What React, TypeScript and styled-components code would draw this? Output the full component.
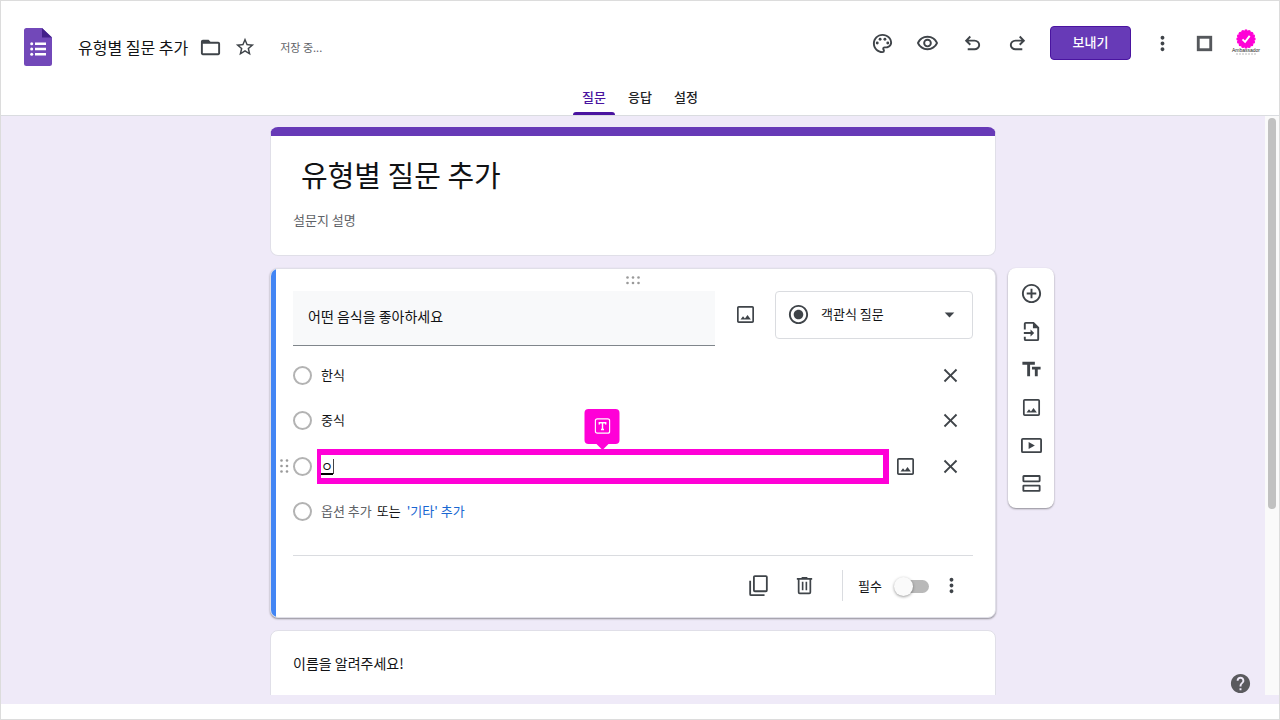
import React from "react";
import styled, { createGlobalStyle, css } from "styled-components";
import {
  MdAddCircleOutline,
  MdArrowDropDown,
  MdClose,
  MdFolderOpen,
  MdHelp,
  MdMoreVert,
  MdOutlinePalette,
  MdOutlineVisibility,
  MdRadioButtonChecked,
  MdStarBorder,
  MdTextFields,
} from "react-icons/md";

const color = {
  ink: "#111214",
  icon: "#3f4449",
  muted: "#5f6368",
  line: "#dadce0",
  purple: "#673ab7",
  purpleDark: "#4a14a0",
  canvas: "#efeaf8",
  blue: "#4285f4",
  link: "#1967d2",
  pink: "#ff00d7",
};

const GlobalStyle = createGlobalStyle`
  * { box-sizing: border-box; }
  body { margin: 0; background: #fff; }
  body, button, input, select {
    font-family: "Noto Sans CJK KR", "Noto Sans", sans-serif;
    font-size: 13px;
    line-height: 20px;
    color: ${color.ink};
  }
  button, input, select { margin: 0; padding: 0; border: 0; background: none; outline: none; }
  button { cursor: pointer; }
  h1, p { margin: 0; font-weight: 400; }
`;

const Page = styled.div`
  display: flex;
  flex-direction: column;
  height: 100vh;
  border: 1px solid #dcdcdc;
  background: #fff;
`;

const Header = styled.header`
  flex: none;
  border-bottom: 1px solid ${color.line};
`;

const TopBar = styled.div`
  display: flex;
  align-items: flex-start;
  justify-content: space-between;
  height: 82px;
  padding: 25px 12px 0 23px;
`;

const TitleGroup = styled.div`
  display: flex;
  align-items: center;
  height: 42px;
`;

const Logo = styled.svg`
  width: 28px;
  height: 38px;
  margin-right: 26px;
`;

const DocName = styled.h1`
  margin-right: 11px;
  font-size: 16px;
  line-height: 24px;
`;

const SaveStatus = styled.span`
  margin-left: 13px;
  font-size: 11px;
  color: ${color.muted};
`;

const Actions = styled.div`
  display: flex;
  align-items: center;
  height: 34px;
`;

const IconButton = styled.button<{ $width?: number; $size?: number }>`
  display: flex;
  flex: none;
  align-items: center;
  justify-content: center;
  width: ${(p) => p.$width ?? 45}px;
  height: 34px;
  color: ${color.icon};

  svg {
    width: ${(p) => p.$size ?? 23}px;
    height: ${(p) => p.$size ?? 23}px;
  }
`;

const SendButton = styled.button`
  width: 81px;
  height: 34px;
  margin: 0 10px;
  padding-bottom: 2px;
  border: 1px solid ${color.purpleDark};
  border-radius: 4px;
  background: ${color.purple};
  color: #fff;
  font-weight: 500;
`;

const Tabs = styled.nav`
  display: flex;
  justify-content: center;
  height: 32px;
`;

const Tab = styled.button<{ $active?: boolean }>`
  display: flex;
  flex-direction: column;
  align-items: center;
  justify-content: space-between;
  width: 46px;
  padding-top: 4px;
  font-weight: 500;
  color: ${(p) => (p.$active ? color.purpleDark : "#202124")};

  &::after {
    content: "";
    width: 42px;
    height: 3px;
    border-radius: 3px 3px 0 0;
    background: ${(p) => (p.$active ? color.purpleDark : "transparent")};
  }
`;

const Workspace = styled.div`
  position: relative;
  display: flex;
  flex: 1;
  min-height: 0;
  padding-bottom: 9px;
  background: ${color.canvas};
`;

const FormArea = styled.main`
  display: grid;
  flex: 1;
  grid-template-columns: 1fr minmax(0, 726px) 1fr;
  grid-auto-rows: max-content;
  gap: 12px 0;
  padding-top: 11px;
  overflow: hidden;
`;

const ScrollTrack = styled.div`
  width: 14px;
  padding: 2px 3px;
  background: #fafafa;
`;

const ScrollThumb = styled.div`
  height: 68%;
  border-radius: 4px;
  background: #c1c1c1;
`;

const BottomStrip = styled.div`
  flex: none;
  height: 15px;
`;

const Card = styled.section`
  grid-column: 2;
  border: 1px solid #e0dfe8;
  border-radius: 8px;
  background: #fff;
`;

const TitleCard = styled(Card)`
  display: flex;
  flex-direction: column;
  gap: 16px;
  padding: 18px 22px 25px;
  border-top: 9px solid ${color.purple};
`;

const FormTitle = styled.input`
  width: 100%;
  height: 40px;
  padding-left: 8px;
  font-size: 29px;
  line-height: 40px;
`;

const FormDescription = styled.input`
  width: 100%;
  height: 20px;

  &::placeholder {
    color: ${color.muted};
    opacity: 1;
  }
`;

const QuestionCard = styled(Card)`
  position: relative;
  padding: 0 22px 3px;
  overflow: hidden;
  box-shadow: 0 1px 2px rgba(0, 0, 0, 0.4);

  &::before {
    content: "";
    position: absolute;
    inset: -1px auto -1px -1px;
    width: 6px;
    background: ${color.blue};
  }
`;

const CardGrip = styled.div`
  display: flex;
  align-items: center;
  justify-content: center;
  height: 22px;
`;

const PromptRow = styled.div`
  display: flex;
  align-items: flex-start;
  margin-bottom: 7px;
`;

const PromptInput = styled.input`
  flex: 1;
  min-width: 0;
  height: 55px;
  padding: 0 15px 5px;
  border-bottom: 1px solid #80868b;
  background: #f8f9fa;
  font-size: 14px;
`;

const PromptImage = styled(IconButton)`
  height: 46px;
`;

const TypePicker = styled.label`
  display: flex;
  align-items: center;
  width: 198px;
  height: 48px;
  padding: 0 11px 2px;
  border: 1px solid ${color.line};
  border-radius: 4px;
  color: ${color.icon};

  svg {
    flex: none;
    width: 23px;
    height: 23px;
  }
`;

const TypeSelect = styled.select`
  flex: 1;
  min-width: 0;
  margin-left: 11px;
  appearance: none;
`;

const OptionRow = styled.div<{ $active?: boolean }>`
  position: relative;
  display: flex;
  align-items: center;
  height: ${(p) => (p.$active ? 46 : 45)}px;
`;

const OptionGrip = styled.svg`
  position: absolute;
  left: -13px;
  width: 9px;
  height: 15px;
`;

const Radio = styled.input`
  flex: none;
  width: 19px;
  height: 19px;
  margin-right: 5px;
  border: 2px solid #b3b3b3;
  border-radius: 50%;
  appearance: none;
`;

const field = css`
  flex: 1;
  min-width: 0;
  height: 35px;
  border: 6px solid transparent;
  border-left-width: 4px;
`;

const OptionInput = styled.input`
  ${field}
  padding-bottom: 2px;
`;

const ActiveField = styled.label`
  ${field}
  position: relative;
  display: flex;
  align-items: center;
  border-color: ${color.pink};
  cursor: text;
`;

const ComposingInput = styled.input`
  width: 12px;
  height: 18px;
  border-bottom: 2px solid #000;
  line-height: 16px;
`;

const Caret = styled.span`
  width: 1px;
  height: 15px;
  background: #444;
`;

const TypeBadge = styled.span`
  position: absolute;
  bottom: 100%;
  left: 50%;
  display: flex;
  align-items: center;
  justify-content: center;
  width: 35px;
  height: 35px;
  margin-bottom: 11px;
  border-radius: 4px;
  background: ${color.pink};
  transform: translateX(-50%);

  svg {
    width: 16px;
    height: 16px;
  }

  &::after {
    content: "";
    position: absolute;
    top: 100%;
    border: 6px solid transparent;
    border-top-color: ${color.pink};
    border-bottom: 0;
  }
`;

const OptionImage = styled(IconButton)`
  margin: 0 11px 0 5px;
`;

const AddOption = styled.button`
  margin-left: 4px;
  padding-bottom: 2px;
  color: ${color.muted};
`;

const OrText = styled.span`
  margin: 0 6px 0 5px;
  padding-bottom: 2px;
`;

const AddOther = styled.button`
  padding-bottom: 2px;
  color: ${color.link};
`;

const CardFooter = styled.footer`
  display: flex;
  align-items: center;
  justify-content: flex-end;
  height: 59px;
  margin-top: 21px;
  border-top: 1px solid ${color.line};
`;

const FooterDivider = styled.span`
  width: 1px;
  height: 31px;
  margin: 0 15px;
  background: ${color.line};
`;

const RequiredLabel = styled.label`
  display: flex;
  align-items: center;
  gap: 15px;
  padding-top: 2px;
`;

const Toggle = styled.input`
  position: relative;
  width: 32px;
  height: 13px;
  border-radius: 7px;
  background: #b9b9b9;
  appearance: none;

  &::before {
    content: "";
    position: absolute;
    top: -3px;
    left: -3px;
    width: 19px;
    height: 19px;
    border-radius: 50%;
    background: #fafafa;
    box-shadow: 0 1px 3px rgba(0, 0, 0, 0.4);
  }
`;

const SideTools = styled.aside`
  grid-column: 3;
  align-self: start;
  justify-self: start;
  display: flex;
  flex-direction: column;
  width: 46px;
  margin-left: 12px;
  padding: 6px 0;
  border-radius: 8px;
  background: #fff;
  box-shadow: 0 1px 2px rgba(0, 0, 0, 0.4);
`;

const ToolButton = styled(IconButton)`
  height: 38px;
`;

const NextCard = styled(Card)`
  min-height: 120px;
  padding: 22px;
  font-size: 14px;
`;

const HelpButton = styled(IconButton)`
  position: absolute;
  right: 27px;
  bottom: 4px;
  color: #5a5a5e;
`;

const FormsLogo = () => (
  <Logo viewBox="0 0 28 38" aria-hidden="true">
    <path d="M2.5 0H18l10 9.5v26a2.5 2.5 0 0 1-2.5 2.5h-23A2.5 2.5 0 0 1 0 35.5v-33A2.5 2.5 0 0 1 2.5 0z" fill="#7248b9" />
    <path d="M18 0l10 9.5H18z" fill="#43208a" />
    <g fill="#fff">
      <path d="M11 14.500h11v2.500H11zM11 19.800h11v2.500H11zM11 25h11v2.500H11z" />
      <circle cx="7.700" cy="15.700" r="1.500" />
      <circle cx="7.700" cy="21" r="1.500" />
      <circle cx="7.700" cy="26.300" r="1.500" />
    </g>
  </Logo>
);

const UndoIcon = () => (
  <svg viewBox="0 0 24 24" fill="currentColor">
    <path d="M7 19v-2h7.100q1.575 0 2.738-1T18 13.500q0-1.500-1.162-2.500T14.100 10H7.800l2.600 2.600L9 14 4 9l5-5 1.400 1.400L7.800 8h6.300q2.425 0 4.163 1.575T20 13.500q0 2.350-1.737 3.925T14.100 19z" />
  </svg>
);

const RedoIcon = () => (
  <svg viewBox="0 0 24 24" fill="currentColor">
    <path d="M9.900 19q-2.425 0-4.163-1.575T4 13.500q0-2.350 1.737-3.925T9.900 8h6.300l-2.600-2.600L15 4l5 5-5 5-1.400-1.400 2.600-2.600H9.900q-1.575 0-2.738 1T6 13.500Q6 15 7.162 16T9.900 17H17v2z" />
  </svg>
);

const SquareIcon = () => (
  <svg viewBox="0 0 24 24" fill="none" stroke="#55585c" strokeWidth="3">
    <rect x="5.500" y="5.500" width="13" height="13" />
  </svg>
);

const ImageIcon = () => (
  <svg viewBox="0 0 24 24">
    <rect x="4" y="4" width="16" height="16" rx="1" fill="none" stroke="currentColor" strokeWidth="1.800" />
    <path d="M6.800 17.300l2.600-3.400 2 2.300 2.700-3.600 3.500 4.700z" fill="currentColor" />
  </svg>
);

const ImportIcon = () => (
  <svg viewBox="0 0 24 24">
    <path d="M5 10V4a1 1 0 0 1 1-1h8l5 5v12a1 1 0 0 1-1 1H6a1 1 0 0 1-1-1v-2.500" fill="none" stroke="currentColor" strokeWidth="2" />
    <path d="M13.500 2.500v6H19.500zM11 10v2.600H4v2h7v2.600l3.800-3.600z" fill="currentColor" />
  </svg>
);

const VideoIcon = () => (
  <svg viewBox="0 0 24 24">
    <rect x="2" y="5" width="20" height="14" rx="1" fill="none" stroke="currentColor" strokeWidth="1.900" />
    <path d="M9 8.300v7.400l6.500-3.700z" fill="currentColor" />
  </svg>
);

const SectionIcon = () => (
  <svg viewBox="0 0 24 24" fill="none" stroke="currentColor" strokeWidth="1.900">
    <rect x="3.500" y="4.200" width="17" height="5.500" rx="0.500" />
    <rect x="3.500" y="14.200" width="17" height="5.500" rx="0.500" />
  </svg>
);

const CopyIcon = () => (
  <svg viewBox="0 0 24 24" fill="none" stroke="currentColor" strokeWidth="1.900">
    <rect x="7.200" y="2.200" width="13.500" height="15.800" rx="1" />
    <path d="M3.300 7v14a1 1 0 0 0 1 1h14" />
  </svg>
);

const TrashIcon = () => (
  <svg viewBox="0 0 24 24" fill="currentColor">
    <path fillRule="evenodd" d="M7 21a2 2 0 0 1-2-2V6H4V4.200h5V3h6v1.200h5V6h-1v13a2 2 0 0 1-2 2zM6.800 6v13.200h10.400V6zM9.200 8h1.700v9H9.200zM13.100 8h1.700v9h-1.700z" />
  </svg>
);

const TextBoxIcon = () => (
  <svg viewBox="0 0 16 16" fill="none" stroke="#fff">
    <rect x="0.800" y="0.800" width="14.400" height="14.400" rx="2" strokeWidth="1.300" />
    <path d="M4.800 6.500V4.700h6.400v1.800M8 4.700v6.800M6.500 11.500h3" strokeWidth="1.400" />
  </svg>
);

const dots = (columns: number, rows: number) =>
  Array.from({ length: columns * rows }, (_, i) => (
    <circle key={i} cx={1.5 + (i % columns) * 5.5} cy={1.5 + Math.floor(i / columns) * 5.5} r="1.300" fill="#9a9a9a" />
  ));

const scallops = Array.from({ length: 16 }, (_, i) => {
  const angle = (i * Math.PI) / 8;
  return <circle key={i} cx={14 + 8 * Math.cos(angle)} cy={10 + 8 * Math.sin(angle)} r="1.700" />;
});

const AvatarButton = styled(IconButton)`
  svg {
    width: 30px;
    height: 28px;
  }
`;

const Avatar = () => (
  <svg viewBox="-1 0 30 28">
    <g fill={color.pink}>
      <circle cx="14" cy="10" r="8.300" />
      {scallops}
    </g>
    <path d="M10.500 10.300l2.600 2.600 4.600-6" fill="none" stroke="#fff" strokeWidth="1.900" />
    <text x="14" y="22.500" textAnchor="middle" fontSize="5" fontFamily="Liberation Sans, sans-serif" fill="#222">
      Ambassador
    </text>
    <path d="M4 25h20" stroke="#bbb" strokeWidth="1" strokeDasharray="2 1" />
  </svg>
);

const tools = [
  { label: "질문 추가", icon: <MdAddCircleOutline /> },
  { label: "질문 가져오기", icon: <ImportIcon /> },
  { label: "제목 및 설명 추가", icon: <MdTextFields /> },
  { label: "이미지 추가", icon: <ImageIcon /> },
  { label: "동영상 추가", icon: <VideoIcon /> },
  { label: "섹션 추가", icon: <SectionIcon /> },
];

const RemoveButton = () => (
  <IconButton $width={45} aria-label="옵션 삭제">
    <MdClose />
  </IconButton>
);

export default function App() {
  return (
    <>
      <GlobalStyle />
      <Page>
        <Header>
          <TopBar>
            <TitleGroup>
              <FormsLogo />
              <DocName>유형별 질문 추가</DocName>
              <IconButton $width={23} aria-label="폴더로 이동"><MdFolderOpen /></IconButton>
              <IconButton $width={45} $size={22} aria-label="별표"><MdStarBorder /></IconButton>
              <SaveStatus>저장 중...</SaveStatus>
            </TitleGroup>
            <Actions>
              <IconButton aria-label="테마 맞춤설정"><MdOutlinePalette /></IconButton>
              <IconButton aria-label="미리보기"><MdOutlineVisibility /></IconButton>
              <IconButton aria-label="실행취소"><UndoIcon /></IconButton>
              <IconButton aria-label="재실행"><RedoIcon /></IconButton>
              <SendButton>보내기</SendButton>
              <IconButton $width={42} aria-label="더보기"><MdMoreVert /></IconButton>
              <IconButton $width={42} aria-label="앱"><SquareIcon /></IconButton>
              <AvatarButton $width={42} aria-label="계정"><Avatar /></AvatarButton>
            </Actions>
          </TopBar>
          <Tabs>
            <Tab $active>질문</Tab>
            <Tab>응답</Tab>
            <Tab>설정</Tab>
          </Tabs>
        </Header>

        <Workspace>
          <FormArea>
            <TitleCard>
              <FormTitle aria-label="설문지 제목" defaultValue="유형별 질문 추가" />
              <FormDescription aria-label="설문지 설명" placeholder="설문지 설명" />
            </TitleCard>

            <QuestionCard>
              <CardGrip>
                <svg width="14" height="9" viewBox="0 0 14 9">{dots(3, 2)}</svg>
              </CardGrip>
              <PromptRow>
                <PromptInput aria-label="질문" defaultValue="어떤 음식을 좋아하세요" />
                <PromptImage $width={60} aria-label="이미지 추가"><ImageIcon /></PromptImage>
                <TypePicker>
                  <MdRadioButtonChecked />
                  <TypeSelect aria-label="질문 유형">
                    <option>객관식 질문</option>
                  </TypeSelect>
                  <MdArrowDropDown />
                </TypePicker>
              </PromptRow>

              {["한식", "중식"].map((name) => (
                <OptionRow key={name}>
                  <Radio type="radio" name="food" aria-label={name} />
                  <OptionInput aria-label="옵션" defaultValue={name} />
                  <RemoveButton />
                </OptionRow>
              ))}

              <OptionRow $active>
                <OptionGrip viewBox="0 0 9 15">{dots(2, 3)}</OptionGrip>
                <Radio type="radio" name="food" aria-label="옵션 3" />
                <ActiveField>
                  <ComposingInput aria-label="옵션 3 이름" defaultValue="ㅇ" />
                  <Caret />
                  <TypeBadge><TextBoxIcon /></TypeBadge>
                </ActiveField>
                <OptionImage $width={23} aria-label="이미지 추가"><ImageIcon /></OptionImage>
                <RemoveButton />
              </OptionRow>

              <OptionRow>
                <Radio type="radio" name="food" aria-label="새 옵션" />
                <AddOption>옵션 추가</AddOption>
                <OrText>또는</OrText>
                <AddOther>'기타' 추가</AddOther>
              </OptionRow>

              <CardFooter>
                <IconButton $width={46} aria-label="복사"><CopyIcon /></IconButton>
                <IconButton $width={46} aria-label="삭제"><TrashIcon /></IconButton>
                <FooterDivider />
                <RequiredLabel>
                  필수
                  <Toggle type="checkbox" role="switch" />
                </RequiredLabel>
                <IconButton $width={44} aria-label="더보기"><MdMoreVert /></IconButton>
              </CardFooter>
            </QuestionCard>

            <SideTools>
              {tools.map((tool) => (
                <ToolButton key={tool.label} $width={46} aria-label={tool.label}>
                  {tool.icon}
                </ToolButton>
              ))}
            </SideTools>

            <NextCard>
              <p>이름을 알려주세요!</p>
            </NextCard>
          </FormArea>
          <ScrollTrack>
            <ScrollThumb />
          </ScrollTrack>
          <HelpButton $width={23} aria-label="도움말"><MdHelp /></HelpButton>
        </Workspace>
        <BottomStrip />
      </Page>
    </>
  );
}
